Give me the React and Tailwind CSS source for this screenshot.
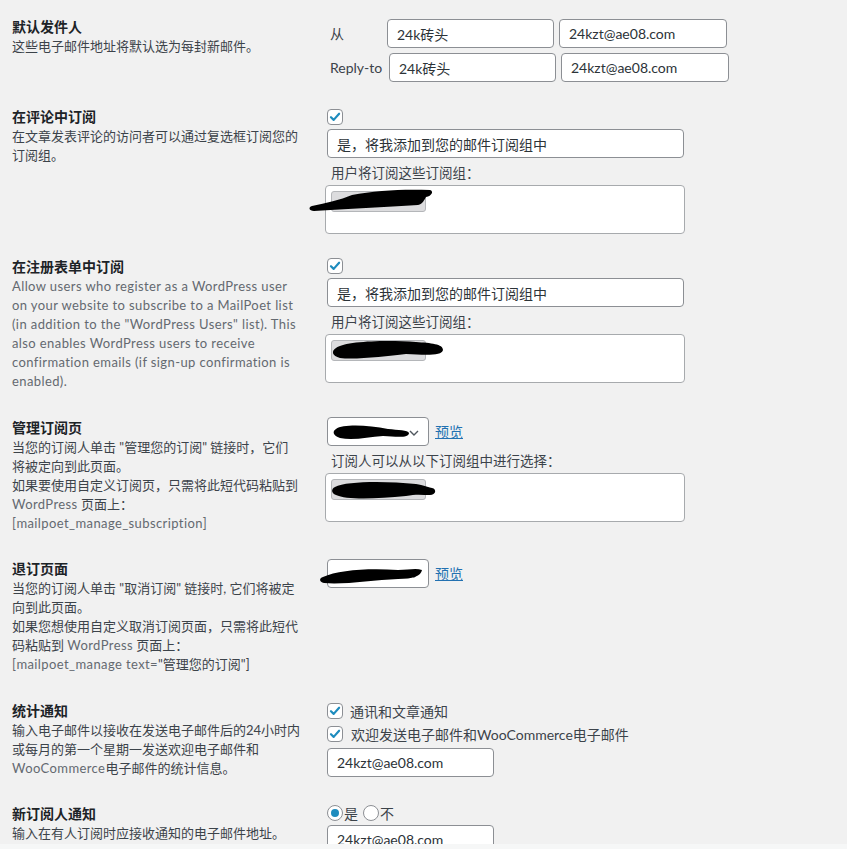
import React from "react";

const font = "font-[Lato,'Noto_Sans_CJK_SC',sans-serif]";

const Title = ({ children }) => (
  <div className="text-[14px] font-semibold leading-[21px] text-[#1d2327]">{children}</div>
);

const Desc = ({ children, className = "text-[#3c434a]" }) => (
  <div className={`whitespace-nowrap text-[13px] leading-[19px] ${className}`}>{children}</div>
);

const Check = () => (
  <span className="flex h-4 w-4 shrink-0 items-center justify-center rounded-[4px] border border-[#8c8f94] bg-white">
    <svg viewBox="0 0 16 16" className="h-[14px] w-[14px]">
      <path d="M3.4 8.3 6.5 11.3 12.7 4.3" fill="none" stroke="#1e8cbe" strokeWidth="2.5" strokeLinecap="round" strokeLinejoin="round" />
    </svg>
  </span>
);

const Radio = ({ on }) => (
  <span className="flex h-4 w-4 shrink-0 items-center justify-center rounded-full border border-[#8c8f94] bg-white">
    {on && <span className="h-2 w-2 rounded-full bg-[#1e8cbe]" />}
  </span>
);

const Input = ({ value, className = "" }) => (
  <input
    readOnly
    defaultValue={value}
    className={`block h-[29px] rounded-[4px] border border-[#8c8f94] bg-white px-[9px] text-[14px] text-[#2c3338] outline-none ${className}`}
  />
);

// black marker scribbles that hide the list names in the screenshot
const Scribble = ({ d, className = "" }) => (
  <svg className={`pointer-events-none absolute left-0 top-0 h-full w-full overflow-visible ${className}`}>
    <path d={d} fill="#000" />
  </svg>
);

const Chevron = () => (
  <svg viewBox="0 0 10 6" className="absolute right-[9px] top-[12px] h-[6px] w-[10px]">
    <path d="M1 1 5 5 9 1" fill="none" stroke="#50575e" strokeWidth="1.4" />
  </svg>
);

const ListBox = ({ scribble }) => (
  <div className="relative -ml-[2px] h-[49px] w-[360px] rounded-[4px] border border-[#a7aaad] bg-white">
    <div className="ml-[5px] mt-[5px] h-[21px] w-[95px] rounded-[3px] border border-[#b4b6b9] bg-[#dcdcde]" />
    <Scribble d={scribble} />
  </div>
);

const PageSelect = ({ scribble }) => (
  <div className="flex items-center">
    <div className="relative h-[29px] w-[102px] rounded-[4px] border border-[#8c8f94] bg-white">
      <Chevron />
      <Scribble d={scribble} />
    </div>
    <a href="#" className="ml-[6px] text-[14px] leading-[19px] text-[#2271b1] underline">预览</a>
  </div>
);

const Label = ({ children }) => (
  <div className="mt-[6px] pl-[4px] text-[13.5px] leading-[19px] text-[#3c434a]">{children}</div>
);

export default function App() {
  return (
    <div className={`min-h-screen bg-[#f1f1f1] ${font}`}>
      <div className="h-[844px] overflow-hidden pl-[12px] pt-[16px]">
        {/* 默认发件人 */}
        <div className="grid grid-cols-[315px_1fr]">
          <div>
            <Title>默认发件人</Title>
            <Desc>这些电子邮件地址将默认选为每封新邮件。</Desc>
          </div>
          <div className="pt-[3px] text-[14px] text-[#3c434a]">
            <div className="flex items-center">
              <span className="w-[60px] pl-[3px]">从</span>
              <Input value="24k砖头" className="w-[167px]" />
              <Input value="24kzt@ae08.com" className="ml-[5px] w-[168px]" />
            </div>
            <div className="mt-[5px] flex items-center">
              <span className="w-[62px] pl-[3px]">Reply-to</span>
              <Input value="24k砖头" className="w-[167px]" />
              <Input value="24kzt@ae08.com" className="ml-[5px] w-[168px]" />
            </div>
          </div>
        </div>

        {/* 在评论中订阅 */}
        <div className="mt-[24px] grid grid-cols-[315px_1fr]">
          <div>
            <Title>在评论中订阅</Title>
            <Desc>
              在文章发表评论的访问者可以通过复选框订阅您的
              <br />
              订阅组。
            </Desc>
          </div>
          <div className="pt-[3px]">
            <Check />
            <Input value="是，将我添加到您的邮件订阅组中" className="mt-[4px] w-[357px]" />
            <Label>用户将订阅这些订阅组：</Label>
            <div className="mt-[2px]">
              <ListBox scribble="M-14 20 C0 17 14 14 26 9 C50 4 80 3 104 4 C108 5 106 10 100 11 C98 14 97 18 92 19 C60 21 20 23 -12 25 C-17 25 -18 21 -14 20 Z" />
            </div>
          </div>
        </div>

        {/* 在注册表单中订阅 */}
        <div className="mt-[22px] grid grid-cols-[315px_1fr]">
          <div>
            <Title>在注册表单中订阅</Title>
            <Desc className="tracking-[0.4px] text-[#646970]">
              Allow users who register as a WordPress user
              <br />
              on your website to subscribe to a MailPoet list
              <br />
              (in addition to the "WordPress Users" list). This
              <br />
              also enables WordPress users to receive
              <br />
              confirmation emails (if sign-up confirmation is
              <br />
              enabled).
            </Desc>
          </div>
          <div className="pt-[2px]">
            <Check />
            <Input value="是，将我添加到您的邮件订阅组中" className="mt-[4px] w-[357px]" />
            <Label>用户将订阅这些订阅组：</Label>
            <div className="mt-[2px]">
              <ListBox scribble="M10 13 C20 6 60 5 90 7 C105 8 117 9 117 15 C116 21 100 20 80 19 C60 21 30 25 14 23 C6 21 5 16 10 13 Z" />
            </div>
          </div>
        </div>

        {/* 管理订阅页 */}
        <div className="mt-[26px] grid grid-cols-[315px_1fr]">
          <div>
            <Title>管理订阅页</Title>
            <Desc>
              当您的订阅人单击 "管理您的订阅" 链接时，它们
              <br />
              将被定向到此页面。
              <br />
              如果要使用自定义订阅页，只需将此短代码粘贴到
              <br />
              <span className="tracking-[0.4px] text-[#646970]">WordPress</span> 页面上：
              <br />
              <span className="tracking-[0.4px] text-[#646970]">[mailpoet_manage_subscription]</span>
            </Desc>
          </div>
          <div>
            <PageSelect scribble="M8 11 C15 6 40 7 60 11 C70 12 80 12 81 15 C81 20 70 19 55 18 C40 19 25 23 12 20 C5 18 4 13 8 11 Z" />
            <Label>订阅人可以从以下订阅组中进行选择：</Label>
            <div className="mt-[2px]">
              <ListBox scribble="M9 13 C20 7 60 7 90 10 C98 11 100 13 106 14 C111 15 110 21 104 21 C96 21 90 20 80 22 C50 25 20 26 10 21 C5 19 5 15 9 13 Z" />
            </div>
          </div>
        </div>

        {/* 退订页面 */}
        <div className="mt-[25px] grid grid-cols-[315px_1fr]">
          <div>
            <Title>退订页面</Title>
            <Desc>
              当您的订阅人单击 "取消订阅" 链接时, 它们将被定
              <br />
              向到此页面。
              <br />
              如果您想使用自定义取消订阅页面，只需将此短代
              <br />
              码粘贴到 <span className="tracking-[0.4px] text-[#646970]">WordPress</span> 页面上：
              <br />
              <span className="tracking-[0.4px] text-[#646970]">[mailpoet_manage text=</span>"管理您的订阅"]
            </Desc>
          </div>
          <div className="pt-[1px]">
            <PageSelect scribble="M-5 17 C10 10 40 8 70 10 C80 10 88 8 94 10 C93 16 85 19 70 19 C45 20 15 25 -4 23 C-9 22 -9 18 -5 17 Z" />
          </div>
        </div>

        {/* 统计通知 */}
        <div className="mt-[26px] grid grid-cols-[315px_1fr]">
          <div>
            <Title>统计通知</Title>
            <Desc>
              输入电子邮件以接收在发送电子邮件后的24小时内
              <br />
              或每月的第一个星期一发送欢迎电子邮件和
              <br />
              <span className="tracking-[0.4px] text-[#646970]">WooCommerce</span>电子邮件的统计信息。
            </Desc>
          </div>
          <div className="pt-[3px] text-[14px] text-[#3c434a]">
            <div className="flex h-4 items-center gap-[7px]">
              <Check />
              <span>通讯和文章通知</span>
            </div>
            <div className="mt-[7px] flex h-4 items-center gap-[8px]">
              <Check />
              <span>欢迎发送电子邮件和WooCommerce电子邮件</span>
            </div>
            <Input value="24kzt@ae08.com" className="mt-[6px] w-[167px]" />
          </div>
        </div>

        {/* 新订阅人通知 */}
        <div className="mt-[25px] grid grid-cols-[315px_1fr]">
          <div>
            <Title>新订阅人通知</Title>
            <Desc>输入在有人订阅时应接收通知的电子邮件地址。</Desc>
          </div>
          <div className="pt-[2px] text-[14px] text-[#3c434a]">
            <div className="flex h-4 items-center">
              <Radio on />
              <span className="ml-[1px]">是</span>
              <span className="ml-[5px]"><Radio /></span>
              <span className="ml-[1px]">不</span>
            </div>
            <Input value="24kzt@ae08.com" className="mt-[4px] w-[167px]" />
          </div>
        </div>
      </div>
      <div className="h-[5px] bg-[#f6f7f7]" />
    </div>
  );
}
